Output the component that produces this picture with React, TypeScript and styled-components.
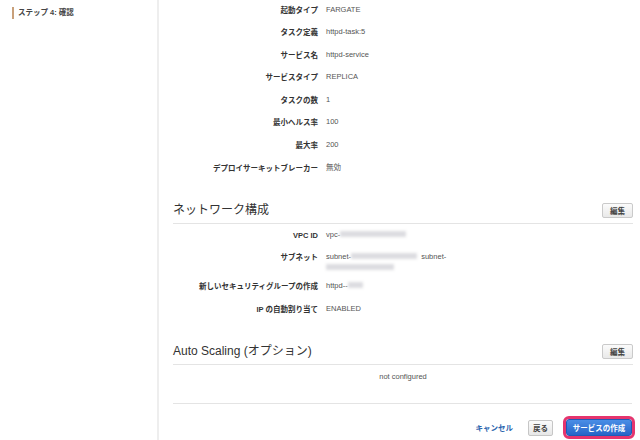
import React from 'react';
import styled, { createGlobalStyle } from 'styled-components';

const GlobalStyle = createGlobalStyle`
  html, body {
    margin: 0;
    padding: 0;
    background: #fff;
  }
  body {
    font-family: "Liberation Sans", "Noto Sans CJK JP", sans-serif;
    color: #333;
  }
`;

const Page = styled.div`
  display: flex;
  height: 440px;
  overflow: hidden;
`;

const Sidebar = styled.aside`
  width: 159px;
  flex-shrink: 0;
  border-right: 2px solid #eeeeee;
  padding: 7px 0 0 12px;
  box-sizing: border-box;
`;

const StepItem = styled.div`
  border-left: 2px solid #c9a07a;
  padding-left: 4px;
  line-height: 12px;
  font-size: 7.5px;
  font-weight: 700;
  color: #444;
`;

const Main = styled.main`
  flex: 1;
  padding: 4.5px 7px 0 14px;
  box-sizing: border-box;
`;

const Row = styled.div`
  display: grid;
  grid-template-columns: 145px 1fr;
  column-gap: 8px;
  min-height: 15px;
  margin-bottom: 7.6px;
`;

const Label = styled.div`
  text-align: right;
  font-size: 7.5px;
  font-weight: 700;
  line-height: 11px;
  color: #333;
`;

const Value = styled.div`
  font-size: 7.5px;
  line-height: 10.5px;
  color: #555;
`;

const Redacted = styled.span<{ $w: number }>`
  display: inline-block;
  vertical-align: middle;
  width: ${(p) => p.$w}px;
  height: 6px;
  margin-top: -2px;
  background: #dcdce0;
  filter: blur(1.6px);
`;

const Section = styled.section`
  margin-top: 24.6px;
`;

const SectionHeader = styled.div`
  display: flex;
  align-items: center;
  justify-content: space-between;
  height: 16px;
  padding-bottom: 5px;
  border-bottom: 1px solid #e4e4e4;
`;

const SectionTitle = styled.h2`
  margin: 0;
  font-size: 12px;
  font-weight: 400;
  line-height: 16px;
  color: #333;
`;

const EditButton = styled.button`
  width: 31px;
  height: 15px;
  padding: 0;
  font-family: inherit;
  font-size: 7.5px;
  font-weight: 700;
  color: #444;
  border: 1px solid #cacaca;
  border-radius: 2px;
  background: linear-gradient(#fbfbfb, #e9e9e9);
`;

const SectionBody = styled.div<{ $center?: boolean }>`
  padding-top: ${(p) => (p.$center ? '6px' : '5.5px')};
  padding-bottom: ${(p) => (p.$center ? '21px' : '0')};
  text-align: ${(p) => (p.$center ? 'center' : 'left')};
`;

const Muted = styled.div`
  font-size: 7.5px;
  line-height: 11px;
  color: #555;
`;

const Footer = styled.div`
  display: flex;
  align-items: center;
  justify-content: flex-end;
  border-top: 1px solid #e4e4e4;
  padding-top: 15px;
  margin-right: 1px;
`;

const LinkButton = styled.button`
  border: none;
  background: none;
  padding: 0;
  margin-right: 15px;
  font-family: inherit;
  font-size: 7.5px;
  font-weight: 700;
  color: #2a63ad;
`;

const SecondaryButton = styled.button`
  width: 25px;
  height: 16px;
  padding: 0;
  margin-right: 13px;
  font-family: inherit;
  font-size: 7.5px;
  font-weight: 700;
  color: #444;
  border: 1px solid #c6c6c6;
  border-radius: 2px;
  background: linear-gradient(#fbfbfb, #e7e7e7);
`;

const PrimaryButton = styled.button`
  width: 66px;
  height: 17px;
  padding: 0;
  font-family: inherit;
  font-size: 7.5px;
  font-weight: 700;
  color: #fff;
  border: 1px solid #1d5bb8;
  border-radius: 3px;
  background: linear-gradient(#4a8ee6, #2665c8);
  outline: 3px solid #e5356e;
  outline-offset: 0;
`;

const summary: [string, string][] = [
  ['起動タイプ', 'FARGATE'],
  ['タスク定義', 'httpd-task:5'],
  ['サービス名', 'httpd-service'],
  ['サービスタイプ', 'REPLICA'],
  ['タスクの数', '1'],
  ['最小ヘルス率', '100'],
  ['最大率', '200'],
  ['デプロイサーキットブレーカー', '無効'],
];

export default function App() {
  return (
    <>
      <GlobalStyle />
      <Page>
        <Sidebar>
          <StepItem>ステップ 4: 確認</StepItem>
        </Sidebar>
        <Main>
          {summary.map(([label, value]) => (
            <Row key={label}>
              <Label>{label}</Label>
              <Value>{value}</Value>
            </Row>
          ))}

          <Section>
            <SectionHeader>
              <SectionTitle>ネットワーク構成</SectionTitle>
              <EditButton>編集</EditButton>
            </SectionHeader>
            <SectionBody>
              <Row>
                <Label>VPC ID</Label>
                <Value>
                  vpc-<Redacted $w={66} />
                </Value>
              </Row>
              <Row>
                <Label>サブネット</Label>
                <Value>
                  subnet-<Redacted $w={66} /> &nbsp;subnet-
                  <br />
                  <Redacted $w={68} />
                </Value>
              </Row>
              <Row>
                <Label>新しいセキュリティグループの作成</Label>
                <Value>
                  httpd--<Redacted $w={15} />
                </Value>
              </Row>
              <Row>
                <Label>IP の自動割り当て</Label>
                <Value>ENABLED</Value>
              </Row>
            </SectionBody>
          </Section>

          <Section>
            <SectionHeader>
              <SectionTitle>Auto Scaling (オプション)</SectionTitle>
              <EditButton>編集</EditButton>
            </SectionHeader>
            <SectionBody $center>
              <Muted>not configured</Muted>
            </SectionBody>
          </Section>

          <Footer>
            <LinkButton>キャンセル</LinkButton>
            <SecondaryButton>戻る</SecondaryButton>
            <PrimaryButton>サービスの作成</PrimaryButton>
          </Footer>
        </Main>
      </Page>
    </>
  );
}
